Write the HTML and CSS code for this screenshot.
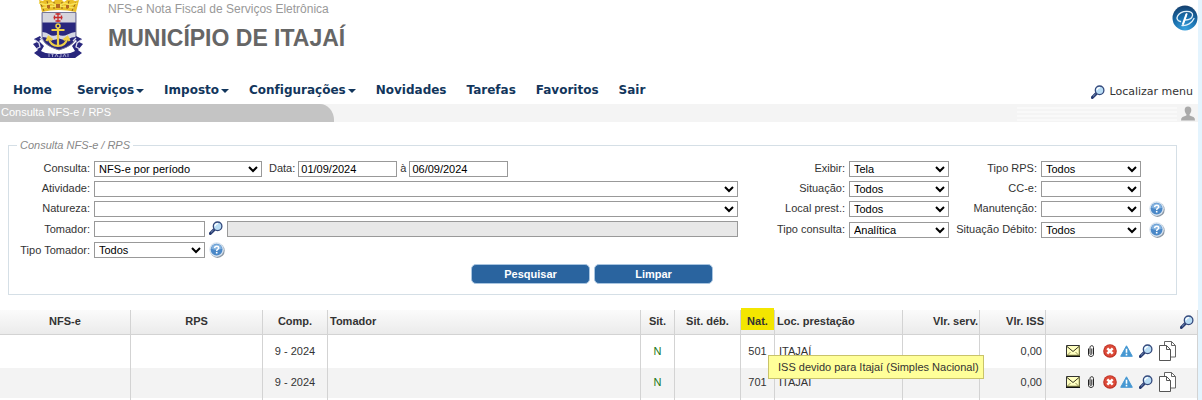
FILE: index.html
```html
<!DOCTYPE html>
<html lang="pt-BR">
<head>
<meta charset="utf-8">
<title>NFS-e Nota Fiscal de Serviços Eletrônica</title>
<link rel="stylesheet" href="styles.css">
</head>
<body>
<svg class="sprite" aria-hidden="true">
  <symbol id="lens" viewBox="0 0 14 14">
    <path d="M1.3 12.5 5.2 8.6" stroke="#253a70" stroke-width="3" stroke-linecap="round"/>
    <path d="M2 11.4 4.6 8.9" stroke="#7f95bd" stroke-width="1"/>
    <circle cx="8.6" cy="5.3" r="4.3" fill="#b9ddf5" stroke="#34497c" stroke-width="1.3"/>
    <path d="M6 5.2A2.8 2.8 0 0 1 9 2.6" stroke="#fff" stroke-width="1.4" fill="none"/>
  </symbol>
  <symbol id="help" viewBox="0 0 16 16">
    <circle cx="8.5" cy="8.7" r="7.2" fill="#8c98a5"/>
    <circle cx="7.6" cy="7.6" r="7.3" fill="#d5e2ef"/>
    <circle cx="7.6" cy="7.6" r="5.9" fill="#4a88c8"/>
    <path d="M2.2 6.8a5.5 5.5 0 0 1 10.8 0q-5.400 2.200-10.800 0z" fill="#83b2df"/>
    <path d="M5.600 6.100Q5.700 4.200 7.700 4.200T9.700 5.900C9.700 7.200 7.700 7.300 7.700 8.900" fill="none" stroke="#fff" stroke-width="1.500"/>
    <rect x="6.900" y="9.900" width="1.600" height="1.600" fill="#fff"/>
  </symbol>
  <symbol id="mail" viewBox="0 0 14 12">
    <path d="M.5.500h13v11H.5z" fill="#ffffc0" stroke="#333"/>
    <path d="M1 10.500h12.500V1" stroke="#77773f" stroke-width="1.500" fill="none"/>
    <path d="M1 1.500l6 5 6-5" stroke="#34341f" fill="none"/>
    <path d="M1.500 10l3-3M12.500 10l-3-3" stroke="#99995c" fill="none"/>
    <path d="M0 11.400h14" stroke="#111" stroke-width="1.200"/>
  </symbol>
  <symbol id="clip" viewBox="0 0 8 12">
    <path d="M1.500 3.500v5.700c0 3 5 3 5 0V2.500c0-2.400-3.500-2.400-3.500 0v6c0 1.300 1.800 1.300 1.800 0V3.500" fill="none" stroke="#222" stroke-width="1"/>
  </symbol>
  <symbol id="cancel" viewBox="0 0 14 14">
    <circle cx="7" cy="7" r="6.800" fill="#bd3025"/>
    <circle cx="7" cy="6.800" r="5.800" fill="#dc4a38"/>
    <path d="M4.300 4.300l5.400 5.400M9.700 4.300 4.300 9.700" stroke="#fff" stroke-width="2.500"/>
  </symbol>
  <symbol id="warn" viewBox="0 0 13 12">
    <path d="M6.500.800 12.300 11.300H.7z" fill="#4698d2" stroke="#4698d2" stroke-linejoin="round"/>
    <path d="M6.500 3.800v4M6.500 8.800v1.600" stroke="#fff" stroke-width="1.600"/>
  </symbol>
  <symbol id="copy" viewBox="0 0 18 20">
    <path d="M5.500.500h7l4 4V16h-11z" fill="#fff" stroke="#666"/>
    <path d="M12.500.500v4h4" fill="none" stroke="#666"/>
    <path d="M.5 4.500h7l4 4v11H.5z" fill="#fff" stroke="#555"/>
    <path d="M7.500 4.500v4h4" fill="none" stroke="#555"/>
  </symbol>
</svg>

<div class="page">
  <header class="header">
    <svg class="crest" viewBox="0 0 52 58" role="img" aria-label="Brasão de Itajaí">
      <path d="M7 0l4 1 1-1h7l2 2 2-2h7l2 2 3-2h6l2 1 4-1-3 12q-18-4-34 0z" fill="#eabf28"/>
      <path d="M8 2l4 9M15 1l2 8M22 2v7M30 2v7M37 1l-2 8M44 2l-4 9" stroke="#8f6317" fill="none"/>
      <path d="M10 8q16-4 32 0M7 3l7 2 5-2 7 3 7-3 5 2 7-2" stroke="#f8e35a" stroke-width="1.500" fill="none"/>
      <path d="M15 5h3v3h-3zM24 4h4v4h-4zM34 5h3v3h-3z" fill="#b66a20"/>
      <path d="M10 12.500h34V36q0 9-17 14-17-5-17-14z" fill="#29277d" stroke="#777796"/>
      <path d="M10.500 13h33v9.500h-33z" fill="#d5d5dd"/>
      <path d="M26 13v9M21.500 17.500h9M23.500 14h5M23.500 21h5M22.500 15.500v4M29.500 15.500v4" stroke="#c62b2b" stroke-width="1.300"/>
      <path d="M10.500 32q4 0 7 2.500t8.500 0q5 2.500 9.500 0t8-2.500v5q-4 0-7 2t-9.500-.500q-6 2.500-9.500.500t-7-2z" fill="#d4d6e3"/>
      <circle cx="26" cy="26" r="2" fill="none" stroke="#eed047" stroke-width="1.500"/>
      <path d="M19.500 30h13M26 28v17M16.500 38q2 8 9.500 8t9.500-8M14.500 41l2-4 4 3M37.500 41l-2-4-4 3" fill="none" stroke="#eed047" stroke-width="2.200"/>
      <path d="M2 39l6-3 2 3-3 2 5 5-3 5 4 2-4 5-7-5 4-3-5-6 4-2zM50 39l-6-3-2 3 3 2-5 5 3 5-4 2 4 5 7-5-4-3 5-6-4-2z" fill="#29277d"/>
      <path d="M3 40l4 3 1 4-4 2M49 40l-4 3-1 4 4 2M8 38l3 3M44 38l-3 3" stroke="#d9daec" fill="none" stroke-width="1.300"/>
      <path d="M8 52q18 4 36 0l-1 6H9z" fill="#29277d"/>
      <path d="M17 54v3M19 54h3M20.500 54v3M23 57l1.500-3 1.500 3M29 54v3h-2M31 57l1.500-3 1.500 3M36 54v3" stroke="#bcbddd" fill="none" stroke-width=".8"/>
    </svg>
    <div class="titles">
      <p class="subtitle">NFS-e Nota Fiscal de Serviços Eletrônica</p>
      <h1 class="title">MUNICÍPIO DE ITAJAÍ</h1>
    </div>
    <svg class="brand" viewBox="0 0 26 26" role="img" aria-label="P">
      <defs><radialGradient id="ball" cx=".5" cy=".95" r=".95"><stop offset="0" stop-color="#38a2df"/><stop offset=".55" stop-color="#176caa"/><stop offset="1" stop-color="#153f6d"/></radialGradient></defs>
      <circle cx="13" cy="13" r="12.500" fill="url(#ball)"/>
      <path d="M11 19.500 14.800 8.500M8.500 16.500C1.500 15 6 6.500 14.500 6.300c9-.3 7.500 8.300-1.200 8.700M10 20.500c5 .500 10-2.500 12-7" fill="none" stroke="#e4f1fa" stroke-width="1.300" stroke-linecap="round"/>
      <path d="M10.800 19.500 14.600 8.800" stroke="#fff" stroke-width="2"/>
    </svg>
  </header>

  <nav class="nav">
    <a class="home" href="#">Home</a>
    <a class="drop" href="#">Serviços</a>
    <a class="drop" href="#">Imposto</a>
    <a class="drop" href="#">Configurações</a>
    <a href="#">Novidades</a>
    <a href="#">Tarefas</a>
    <a href="#">Favoritos</a>
    <a href="#">Sair</a>
    <a class="find" href="#"><svg class="icon"><use href="#lens"/></svg>Localizar menu</a>
  </nav>

  <div class="bar">
    <div class="tab">Consulta NFS-e / RPS</div>
    <div class="stripes"></div>
    <svg class="user" viewBox="0 0 14 15" role="img" aria-label="Usuário"><path d="M7 .5C4.700.500 3.500 2 3.700 4.300c.1 1.800.8 3.100 1.700 3.900v1.300L1.500 11Q0 11.800 0 14.500h14Q14 11.800 12.500 11L8.600 9.500V8.200c.9-.8 1.600-2.100 1.700-3.900C10.500 2 9.300.500 7 .500z" fill="#aaa"/></svg>
  </div>

  <form>
    <fieldset class="search">
      <legend>Consulta NFS-e / RPS</legend>
      <div class="fields">
        <div class="grid main">
          <label for="consulta">Consulta:</label>
          <div class="line dates">
            <select id="consulta" class="period"><option>NFS-e por período</option></select>
            <label class="date-label" for="inicio">Data:</label>
            <input id="inicio" class="date" type="text" value="01/09/2024">
            <label for="fim">à</label>
            <input id="fim" class="date" type="text" value="06/09/2024">
          </div>
          <label for="atividade">Atividade:</label>
          <select id="atividade"><option></option></select>
          <label for="natureza">Natureza:</label>
          <select id="natureza"><option></option></select>
          <label for="tomador">Tomador:</label>
          <div class="line">
            <input id="tomador" class="short" type="text">
            <svg class="icon"><use href="#lens"/></svg>
            <input class="name" type="text" aria-label="Nome do tomador" disabled>
          </div>
          <label for="tipo-tomador">Tipo Tomador:</label>
          <div class="line">
            <select id="tipo-tomador" class="short"><option>Todos</option></select>
            <svg class="help"><use href="#help"/></svg>
          </div>
        </div>
        <div class="grid side">
          <label for="exibir">Exibir:</label>
          <select id="exibir"><option>Tela</option></select>
          <label for="rps">Tipo RPS:</label>
          <select id="rps"><option>Todos</option></select>
          <span></span>
          <label for="situacao">Situação:</label>
          <select id="situacao"><option>Todos</option></select>
          <label for="cce">CC-e:</label>
          <select id="cce"><option></option></select>
          <span></span>
          <label for="local">Local prest.:</label>
          <select id="local"><option>Todos</option></select>
          <label for="manutencao">Manutenção:</label>
          <select id="manutencao"><option></option></select>
          <svg class="help"><use href="#help"/></svg>
          <label for="tipo">Tipo consulta:</label>
          <select id="tipo"><option>Analítica</option></select>
          <label for="debito">Situação Débito:</label>
          <select id="debito"><option>Todos</option></select>
          <svg class="help"><use href="#help"/></svg>
        </div>
      </div>
      <div class="buttons">
        <button type="submit">Pesquisar</button>
        <button type="reset">Limpar</button>
      </div>
    </fieldset>
  </form>

  <table class="results">
    <colgroup><col class="c-nfse"><col class="c-rps"><col class="c-comp"><col><col class="c-small"><col class="c-mid"><col class="c-small"><col class="c-loc"><col class="c-serv"><col class="c-mid"><col class="c-actions"></colgroup>
    <thead>
      <tr>
        <th>NFS-e</th><th>RPS</th><th>Comp.</th><th class="left">Tomador</th><th>Sit.</th><th>Sit. déb.</th>
        <th class="nat"><mark>Nat.</mark></th><th class="left">Loc. prestação</th><th class="right">Vlr. serv.</th><th class="right">Vlr. ISS</th>
        <th class="right"><svg class="icon"><use href="#lens"/></svg></th>
      </tr>
    </thead>
    <tbody>
      <tr class="first">
        <td></td><td></td><td>9 - 2024</td><td></td><td class="ok">N</td><td></td>
        <td class="nat">501<span class="tip" role="tooltip">ISS devido para Itajaí (Simples Nacional)</span></td>
        <td class="place">ITAJAÍ</td><td></td><td class="value">0,00</td>
        <td><div class="actions"><svg class="mail"><use href="#mail"/></svg><svg class="clip"><use href="#clip"/></svg><svg class="icon"><use href="#cancel"/></svg><svg class="warn"><use href="#warn"/></svg><svg class="icon"><use href="#lens"/></svg><svg class="copy"><use href="#copy"/></svg></div></td>
      </tr>
      <tr class="alt">
        <td></td><td></td><td>9 - 2024</td><td></td><td class="ok">N</td><td></td>
        <td>701</td><td class="place">ITAJAÍ</td><td></td><td class="value">0,00</td>
        <td><div class="actions"><svg class="mail"><use href="#mail"/></svg><svg class="clip"><use href="#clip"/></svg><svg class="icon"><use href="#cancel"/></svg><svg class="warn"><use href="#warn"/></svg><svg class="icon"><use href="#lens"/></svg><svg class="copy"><use href="#copy"/></svg></div></td>
      </tr>
      <tr class="end"><td></td><td></td><td></td><td></td><td></td><td></td><td></td><td></td><td></td><td></td><td></td></tr>
    </tbody>
  </table>
</div>
</body>
</html>
```

FILE: styles.css
```css
* { box-sizing: border-box; }

body {
  margin: 0;
  background: #e4f4fe;
  font: 11px/14px "Liberation Sans", Arial, sans-serif;
  color: #333;
}

svg { display: block; flex: none; }
.sprite { position: absolute; width: 0; height: 0; }
.icon { width: 14px; height: 14px; }
.help { width: 16px; height: 16px; }

.page {
  min-height: 100vh;
  margin-right: 4px;
  background: #fff;
}

/* Header */
.header {
  display: flex;
  align-items: flex-start;
  height: 76px;
  padding: 0 0 0 32px;
}
.crest { width: 52px; height: 58px; }
.titles { flex: 1; margin-left: 24px; }
.subtitle { margin: 2px 0 0; font-size: 12px; color: #999; }
.title { margin: 8px 0 0; font-size: 23px; line-height: 28px; color: #666; }
.brand { width: 26px; height: 26px; margin-top: 5px; }

/* Menu */
.nav {
  display: flex;
  align-items: center;
  gap: 20px;
  height: 28px;
  padding: 0 5px 0 13px;
  font: bold 12px/16px "DejaVu Sans", Verdana, sans-serif;
  font-variant-ligatures: none;
}
.nav a { color: #12365c; text-decoration: none; white-space: nowrap; }
.nav .home { margin-right: 5px; }
.drop { display: flex; align-items: center; gap: 2px; }
.drop::after {
  content: "";
  border: solid transparent;
  border-width: 4px 4px 0;
  border-top-color: #12365c;
  margin-top: 2px;
}
.nav .find {
  display: flex;
  align-items: center;
  gap: 4px;
  margin-left: auto;
  margin-top: 4px;
  font-size: 11px;
  font-weight: normal;
  color: #333;
}

/* Title bar */
.bar {
  display: flex;
  align-items: center;
  height: 18px;
  background: #f4f4f4;
}
.tab {
  width: 334px;
  height: 18px;
  padding-left: 1px;
  line-height: 17px;
  color: #fff;
  background: #c4c4c4;
  border-top-right-radius: 14px 16px;
}
.stripes {
  width: 160px;
  height: 16px;
  margin-left: auto;
  background: repeating-linear-gradient(#f4f4f4 0 2px, #f9f9f9 2px 4px);
}
.user { width: 14px; height: 15px; margin: 0 3px 0 4px; }

/* Search form */
.search {
  min-width: 0;
  margin: 16px 21px 0 8px;
  padding: 9px 11px 10px 0;
  border: 1px solid #d5dfe6;
}
.search legend {
  margin-left: 8px;
  padding: 0 3px;
  font-style: italic;
  color: #888;
}
.fields { display: flex; gap: 39px; }
.grid {
  display: grid;
  grid-template-rows: 16px 16px 16px 17px 16px;
  gap: 4px;
}
.grid > label { text-align: right; white-space: nowrap; }
.main { flex: 1; grid-template-columns: 81px 1fr; }
.side {
  grid-template-columns: auto 100px 84px 100px 20px;
  align-items: end;
}
.side > label { align-self: start; }
.side .help { justify-self: end; }
.grid > label:nth-of-type(n+4) { line-height: 16px; }
.side > label:nth-of-type(-n+6) { line-height: 14px; }
.line { display: flex; gap: 4px; }
.dates { gap: 3px; }
.date-label { margin-left: 4px; }

select, input {
  min-width: 0;
  height: 16px;
  margin: 0;
  border: 1px solid #999;
  border-radius: 0;
  font: 11px "Liberation Sans", Arial, sans-serif;
  color: #000;
  background-color: #fff;
}
input { padding: 0 2px; }
select { padding: 0; }
.period { width: 168px; }
.date { width: 99px; }
.short { width: 111px; }
.name { flex: 1; }
input:disabled { background: #e8e8e8; }

.buttons {
  display: flex;
  justify-content: center;
  gap: 4px;
  margin: 6px -10px 0 0;
}
.buttons button {
  width: 119px;
  height: 20px;
  padding: 0;
  border: 1px solid #a9c5e0;
  border-radius: 5px;
  font: bold 11px "Liberation Sans", Arial, sans-serif;
  color: #fff;
  background: #2a649f;
}

/* Results */
.results {
  width: 100%;
  margin-top: 15px;
  table-layout: fixed;
  border-collapse: separate;
  border-spacing: 0;
}
.c-nfse { width: 131px; }
.c-rps { width: 132px; }
.c-comp { width: 65px; }
.c-small { width: 34px; }
.c-mid { width: 66px; }
.c-loc { width: 128px; }
.c-serv { width: 77px; }
.c-actions { width: 152px; }
.results th, .results td {
  padding: 0 0 2px;
  border-right: 1px solid #d3d3d3;
  text-align: center;
}
.results th {
  height: 25px;
  border-bottom: 1px solid #d3d3d3;
  background: linear-gradient(#fbfbfb, #ebebeb);
}
.results .left { padding-left: 2px; text-align: left; }
.results .right { padding-right: 1px; text-align: right; }
.right .icon { margin: 2px 2px 0 auto; }
.nat { position: relative; }
.nat mark {
  position: absolute;
  inset: -2px 0 4px 0;
  padding-top: 6px;
  color: #333;
  background: #f3e600;
}
.first td { height: 33px; }
.alt td { height: 30px; background: #f3f3f3; }
.results .end td { height: 2px; padding: 0; }
.results .place { padding-left: 4px; text-align: left; }
.results .value { padding-right: 3px; text-align: right; }
.results .ok { color: #187818; }
.tip {
  position: absolute;
  z-index: 1;
  top: 20px;
  left: 27px;
  padding: 4px 4px 4px 9px;
  border: 1px solid #c9c36a;
  background: #ffff99;
  white-space: nowrap;
}
.actions {
  display: flex;
  align-items: center;
  padding-left: 20px;
}
.mail { width: 14px; height: 12px; }
.clip { width: 8px; height: 12px; margin: 0 8px 0 7px; }
.warn { width: 13px; height: 12px; margin: 0 6px 0 3px; }
.copy { width: 18px; height: 20px; margin-left: 6px; }
```
